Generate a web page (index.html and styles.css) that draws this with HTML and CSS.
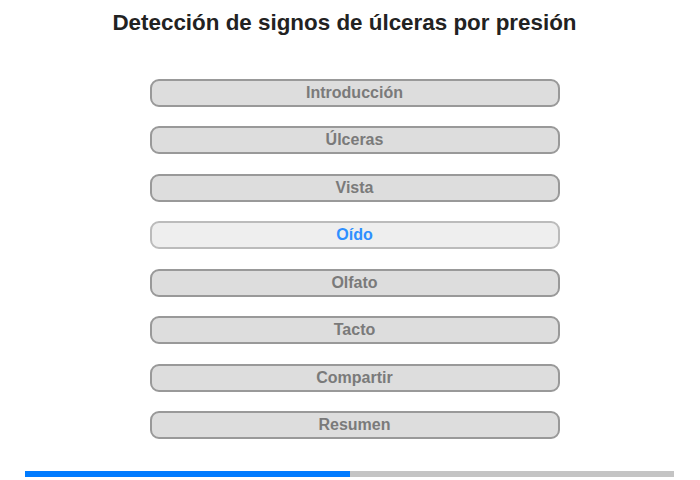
FILE: index.html
```html
<!DOCTYPE html>
<html lang="es">
<head>
    <meta charset="UTF-8">
    <meta name="viewport" content="width=device-width, initial-scale=1.0">
    <title>Detección de signos de úlceras por presión</title>
    <link rel="stylesheet" href="styles.css">
</head>
<body>
    <h1>Detección de signos de úlceras por presión</h1>
    <div class="menu">
        <button class="menu-item">Introducción</button>
        <button class="menu-item">Úlceras</button>
        <button class="menu-item">Vista</button>
        <button class="menu-item active">Oído</button>
        <button class="menu-item">Olfato</button>
        <button class="menu-item">Tacto</button>
        <button class="menu-item">Compartir</button>
        <button class="menu-item">Resumen</button>
    </div>
    <div class="progress">
        <div class="progress-fill" style="width: 50%"></div>
    </div>
</body>
</html>
```

FILE: styles.css
```css
body {
    font-family: "Liberation Sans", Arial, sans-serif;
    margin: 0;
    background: #fff;
}
h1 {
    font-size: 22.4px;
    font-weight: bold;
    color: #222;
    text-align: center;
    margin: 10px 0 0 -11px;
    line-height: 26px;
}
.menu {
    display: flex;
    flex-direction: column;
    align-items: center;
    gap: 19.45px;
    margin: 43px 0 0 9px;
}
.menu-item {
    width: 410px;
    height: 28px;
    background: #dddddd;
    border: 2px solid #999;
    border-radius: 9px;
    color: #7a7a7a;
    font-family: "Liberation Sans", Arial, sans-serif;
    font-size: 16px;
    font-weight: bold;
    padding: 0;
}
.menu-item.active {
    background: #eeeeee;
    border-color: #bbb;
    color: #2e8fff;
}
.progress {
    margin: 32px 0 0 25px;
    width: 649px;
    height: 6px;
    background: #c4c4c4;
}
.progress-fill {
    height: 100%;
    background: #007bff;
}
```
